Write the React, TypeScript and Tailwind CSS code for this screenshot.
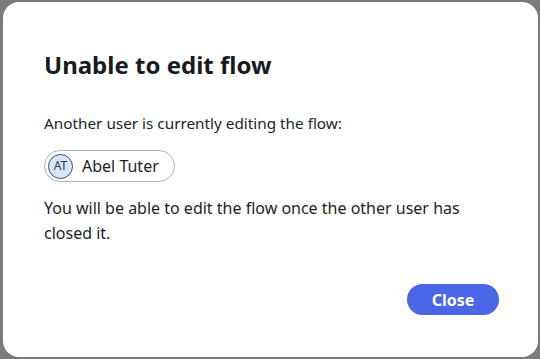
import React from 'react';

const App: React.FC = () => {
  return (
    <div
      className="w-[540px] h-[359px] bg-[#7b7b7b] pt-[2px] pl-[3px] overflow-hidden"
      style={{ fontFamily: '"Noto Sans", "Open Sans", sans-serif' }}
    >
      <div className="w-[535px] h-[355px] bg-white rounded-[16px] flex flex-col pl-[41px] pr-[39px] pt-[47px] pb-[42px] text-[#1b1f24]">
        {/* Title */}
        <h2 className="text-[24px] leading-[32px] font-bold text-[#161b22]">Unable to edit flow</h2>

        {/* Body */}
        <p className="mt-[30px] text-[15.3px] leading-[24px]">Another user is currently editing the flow:</p>

        <div className="mt-[15px] flex">
          <div className="flex items-center gap-[9px] h-[32px] pl-[3px] pr-[15px] rounded-full border border-[#a9b1ba]">
            <div className="w-[25px] h-[25px] rounded-full bg-[#d9e6fb] border border-[#3f4f6a] flex items-center justify-center text-[12px] text-[#2a3650]">
              AT
            </div>
            <span className="text-[16px] leading-[24px]">Abel Tuter</span>
          </div>
        </div>

        <p className="mt-[14px] text-[16px] leading-[25px] pr-[20px]">
          You will be able to edit the flow once the other user has closed it.
        </p>

        {/* Footer */}
        <div className="mt-auto flex justify-end">
          <button className="w-[92px] h-[31px] rounded-full bg-[#4a66e6] text-white text-[16px] font-bold">
            Close
          </button>
        </div>
      </div>
    </div>
  );
};

export default App;
